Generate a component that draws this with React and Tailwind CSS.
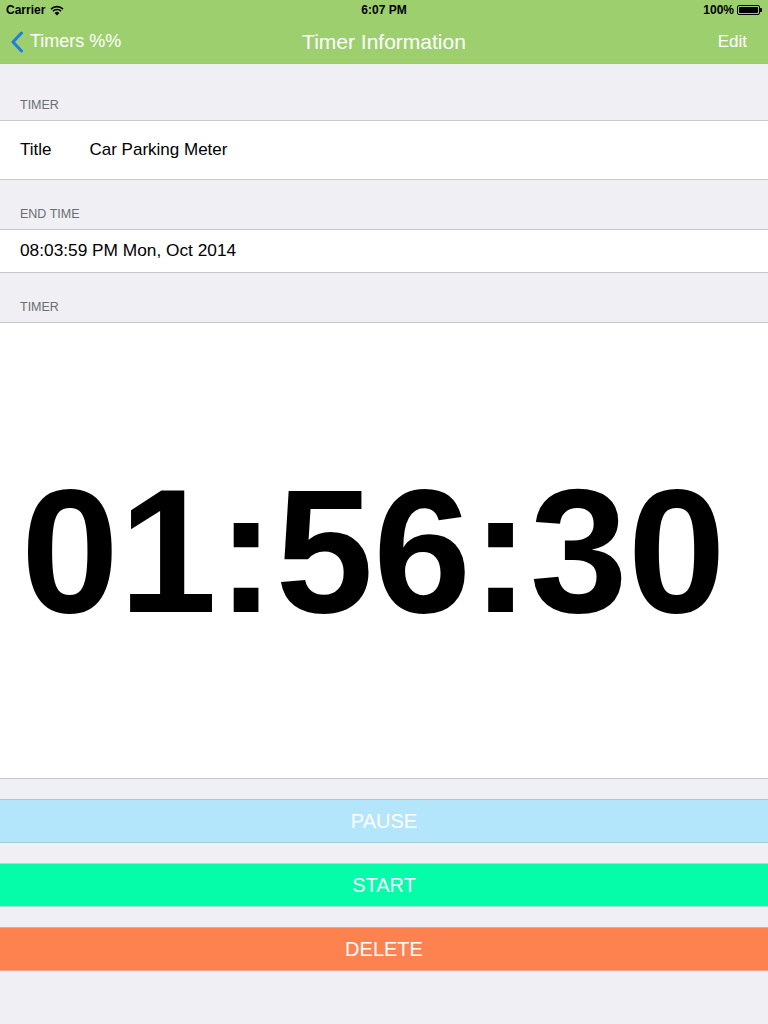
const FONT = { fontFamily: '"Liberation Sans", Arial, sans-serif' }

function StatusBar() {
  return (
    <div className="relative flex h-5 items-center justify-between px-[6px] text-[12px] font-bold text-black">
      <div className="flex items-center gap-[5px]">
        <span>Carrier</span>
        <svg width="14" height="11" viewBox="0 0 14 11">
          <path d="M7 10.5 L4.6 7.9 A3.4 3.4 0 0 1 9.4 7.9 Z" fill="#000" />
          <path d="M2.9 6.2 A5.8 5.8 0 0 1 11.1 6.2" stroke="#000" strokeWidth="1.6" fill="none" />
          <path d="M1 4.1 A8.6 8.6 0 0 1 13 4.1" stroke="#000" strokeWidth="1.6" fill="none" />
        </svg>
      </div>
      <span className="absolute left-1/2 -translate-x-1/2">6:07 PM</span>
      <div className="flex items-center gap-[3px]">
        <span>100%</span>
        <div className="flex items-center">
          <div className="flex h-[10px] w-[23px] items-center rounded-[2px] border border-black p-[1px]">
            <div className="h-full w-full rounded-[1px] bg-black" />
          </div>
          <div className="h-[4px] w-[2px] rounded-r-[1px] bg-black" />
        </div>
      </div>
    </div>
  )
}

function NavBar() {
  return (
    <div className="relative flex h-11 items-center justify-between border-b border-[#a9b9a0] pl-[10px] pr-2">
      <div className="flex items-center gap-[6px] text-[18px] text-white">
        <svg width="14" height="22" viewBox="0 0 14 22">
          <path d="M11.5 2 L3 11 L11.5 20" stroke="#1b7fe3" strokeWidth="3" fill="none" strokeLinecap="round" strokeLinejoin="round" />
        </svg>
        <span>Timers %%</span>
      </div>
      <span className="absolute left-1/2 -translate-x-1/2 text-[21px] text-white">Timer Information</span>
      <span className="pr-[13px] text-[17px] text-white">Edit</span>
    </div>
  )
}

function SectionHeader({ children, className }) {
  return (
    <div className={`flex items-end px-5 pb-[5px] text-[12.5px] uppercase text-[#6d6d72] ${className}`}>
      {children}
    </div>
  )
}

function ActionButton({ label, bg, border }) {
  return (
    <button
      type="button"
      className={`flex h-11 w-full items-center justify-center border-y text-[20px] text-white ${bg} ${border}`}
    >
      {label}
    </button>
  )
}

export default function App() {
  return (
    <div className="flex min-h-[1024px] w-[768px] flex-col bg-[#efeff4]" style={FONT}>
      <div className="bg-[#9dcf6f]">
        <StatusBar />
        <NavBar />
      </div>

      <SectionHeader className="h-[56px]">Timer</SectionHeader>
      <div className="flex h-[60px] items-center gap-[38px] border-y border-[#c8c7cc] bg-white px-5 text-[17px] text-black">
        <span className="-mt-[1px]">Title</span>
        <span>Car Parking Meter</span>
      </div>

      <SectionHeader className="h-[49px]">End Time</SectionHeader>
      <div className="flex h-[44px] items-center border-y border-[#c8c7cc] bg-white px-5 text-[17.3px] text-black">
        08:03:59 PM Mon, Oct 2014
      </div>

      <SectionHeader className="h-[49px]">Timer</SectionHeader>
      <div className="flex h-[457px] items-center border-y border-[#c8c7cc] bg-white pl-[21px]">
        <span className="text-[176px] font-bold leading-none text-black">01:56:30</span>
      </div>

      <div className="mt-[20px] flex flex-col gap-[20px]">
        <ActionButton label="PAUSE" bg="bg-[#b3e5fb]" border="border-[#a9c9d8]" />
        <ActionButton label="START" bg="bg-[#05fca8]" border="border-[#a8e0cc]" />
        <ActionButton label="DELETE" bg="bg-[#fe8250]" border="border-[#e8a890]" />
      </div>
    </div>
  )
}
